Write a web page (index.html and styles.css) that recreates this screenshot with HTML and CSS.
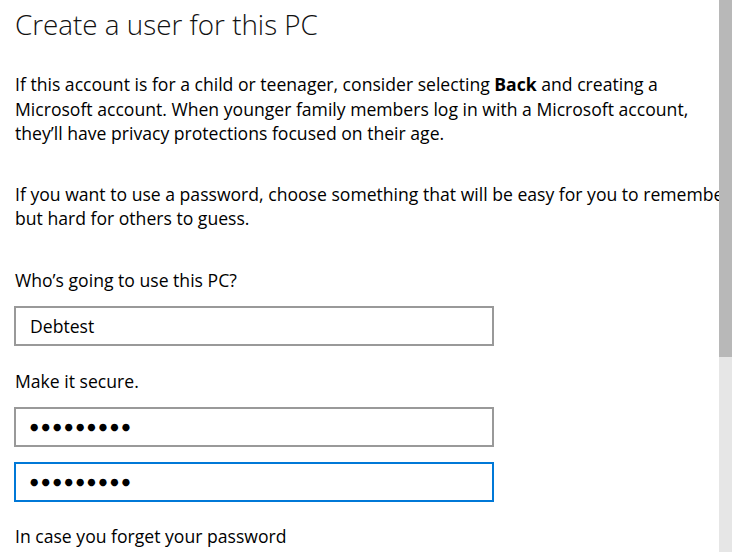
FILE: index.html
```html
<!DOCTYPE html>
<html lang="en">
<head>
<meta charset="utf-8">
<title>Create a user for this PC</title>
<link rel="stylesheet" href="styles.css">
</head>
<body>
<div class="page">
  <main class="content">
    <h1 class="title">Create a user for this PC</h1>
    <p class="para first">If this account is for a child or teenager, consider selecting <b>Back</b> and creating a<br>Microsoft account. When younger family members log in with a Microsoft account,<br>they’ll have privacy protections focused on their age.</p>
    <p class="para second">If you want to use a password, choose something that will be easy for you to remember,<br>but hard for others to guess.</p>
    <p class="label who">Who’s going to use this PC?</p>
    <div class="field">Debtest</div>
    <p class="label secure">Make it secure.</p>
    <div class="field dots">●●●●●●●●●</div>
    <div class="field dots focused">●●●●●●●●●</div>
    <p class="label forget">In case you forget your password</p>
  </main>
  <div class="scrollbar">
    <div class="thumb"></div>
    <div class="track"></div>
  </div>
</div>
</body>
</html>
```

FILE: styles.css
```css
html, body {
  margin: 0;
  padding: 0;
  background: #ffffff;
}
body {
  font-family: "Open Sans", "Noto Sans", sans-serif;
  color: #000000;
}
.page {
  display: flex;
  width: 732px;
  height: 552px;
  overflow: hidden;
}
.content {
  flex: 1;
  min-width: 0;
  overflow: hidden;
  padding: 0 0 0 15px;
  white-space: nowrap;
}
.title {
  margin: 4px 0 0 0;
  font-size: 27.8px;
  font-weight: 300;
  line-height: 40px;
  color: #111;
}
.para {
  margin: 0;
  font-size: 17.6px;
  line-height: 24.5px;
}
.para b { font-weight: 700; }
.first { margin-top: 28px; }
.second { margin-top: 36px; }
.label {
  margin: 0;
  font-size: 17.6px;
  line-height: 24px;
}
.who { margin-top: 37px; }
.secure { margin-top: 23px; }
.forget { margin-top: 22px; }
.field {
  box-sizing: border-box;
  width: 480px;
  height: 40px;
  margin-left: -1px;
  border: 2px solid #999999;
  padding: 0 14px;
  display: flex;
  align-items: center;
  font-size: 17.6px;
}
.label + .field { margin-top: 14px; }
.field + .field { margin-top: 15px; }
.dots {
  font-family: "DejaVu Sans", sans-serif;
  font-size: 9.6px;
  letter-spacing: 3.1px;
}
.focused { border-color: #0078d7; }
.scrollbar {
  width: 13px;
  flex: 0 0 13px;
  display: flex;
  flex-direction: column;
}
.thumb {
  height: 357px;
  background: #b8b8b8;
}
.track {
  flex: 1;
  background: #e6e6e6;
}
```
